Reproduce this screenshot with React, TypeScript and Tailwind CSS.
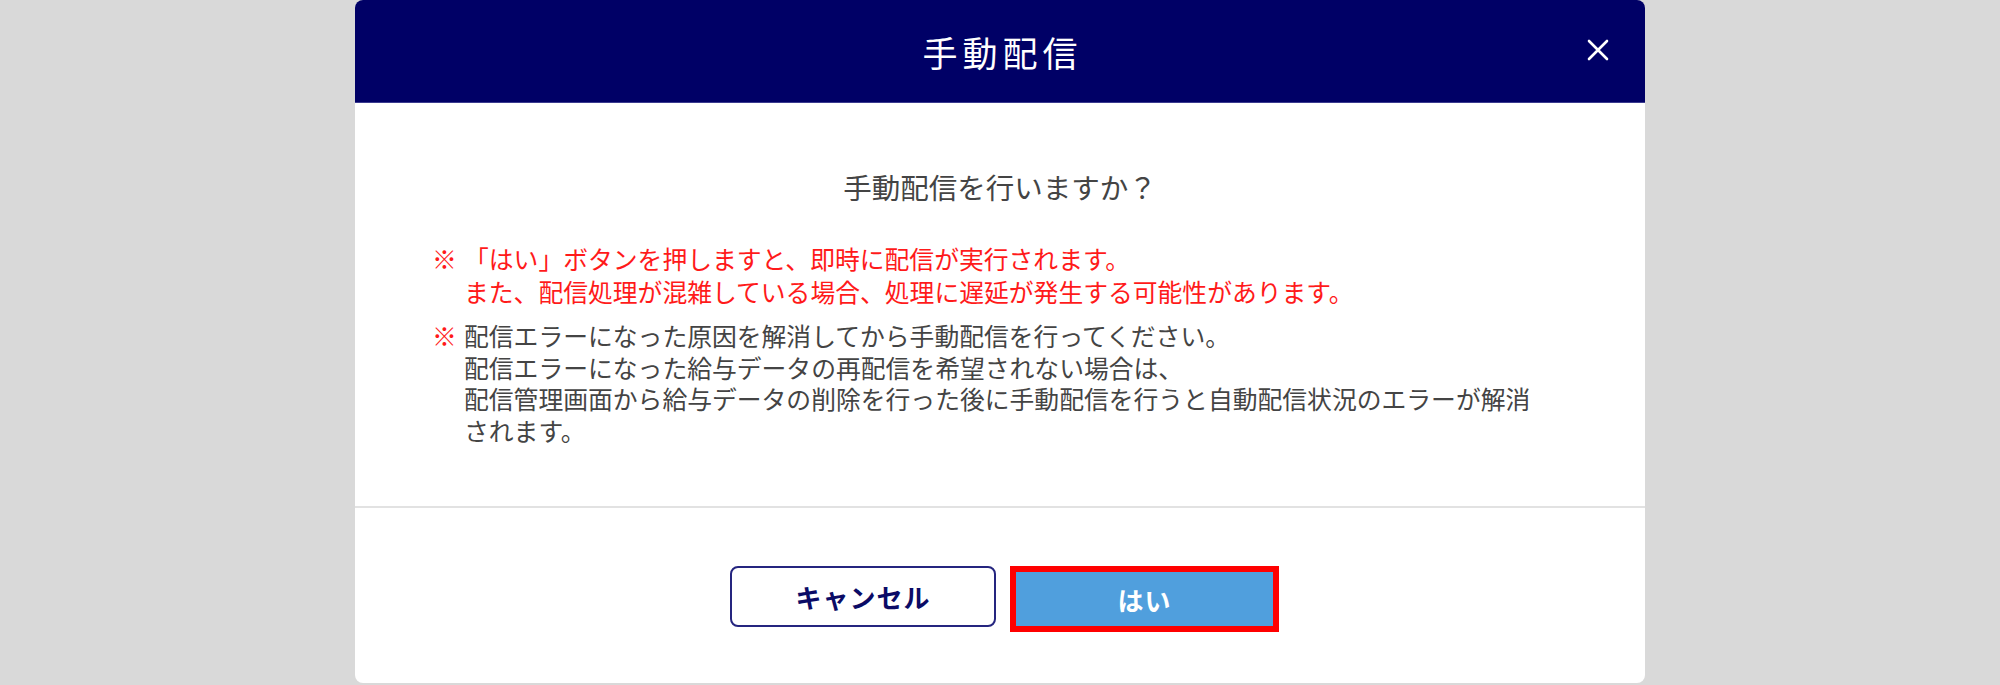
export default function App() {
  const font = { fontFamily: '"Noto Sans CJK JP", "Noto Sans", sans-serif' };

  return (
    <main
      className="min-h-screen bg-[#d9d9d9] flex justify-center"
      style={font}
    >
      {/* modal */}
      <div className="w-[1290px] h-[683px] bg-white rounded-[8px] overflow-hidden flex flex-col">
        {/* header */}
        <div className="relative h-[103px] bg-[#000066] border-b border-[#3b3b8f] flex items-center justify-center">
          <h1 className="text-white text-[35px] tracking-[5px] pl-[5px] font-normal leading-none">
            手動配信
          </h1>
          <button className="absolute right-[35px] top-[38px] w-[24px] h-[24px] flex items-center justify-center">
            <svg width="24" height="24" viewBox="0 0 24 24">
              <path
                d="M3 3 L21 21 M21 3 L3 21"
                stroke="white"
                strokeWidth="2.6"
                strokeLinecap="round"
              />
            </svg>
          </button>
        </div>

        {/* body */}
        <div className="pt-[64px] pb-[60px] px-[77px]">
          <p className="text-center text-[28.5px] leading-[40px] text-[#444]">
            手動配信を行いますか？
          </p>

          <div className="mt-[35px] flex text-[#ff1a1a] text-[24.8px] leading-[33px] whitespace-nowrap">
            <span className="w-[32px] shrink-0 font-black">※</span>
            <p>
              「はい」ボタンを押しますと、即時に配信が実行されます。
              <br />
              また、配信処理が混雑している場合、処理に遅延が発生する可能性があります。
            </p>
          </div>

          <div className="mt-[12px] flex text-[24.8px] leading-[31.5px] whitespace-nowrap">
            <span className="w-[32px] shrink-0 font-black text-[#ff1a1a]">※</span>
            <p className="text-[#444]">
              配信エラーになった原因を解消してから手動配信を行ってください。
              <br />
              配信エラーになった給与データの再配信を希望されない場合は、
              <br />
              配信管理画面から給与データの削除を行った後に手動配信を行うと自動配信状況のエラーが解消
              <br />
              されます。
            </p>
          </div>
        </div>

        <div className="h-[2px] bg-[#e2e2e2]" />

        {/* footer */}
        <div className="pt-[58px] flex justify-center items-start gap-[14px] pl-[9px]">
          <button className="w-[266px] h-[61px] rounded-[8px] border-2 border-[#25257f] bg-white text-[#0b0b66] text-[26px] tracking-[1px] font-bold">
            キャンセル
          </button>
          <button className="w-[269px] h-[66px] border-[6px] border-[#ff0000] bg-[#509fdd] text-white text-[26px] tracking-[1px] font-bold">
            はい
          </button>
        </div>
      </div>
    </main>
  );
}
